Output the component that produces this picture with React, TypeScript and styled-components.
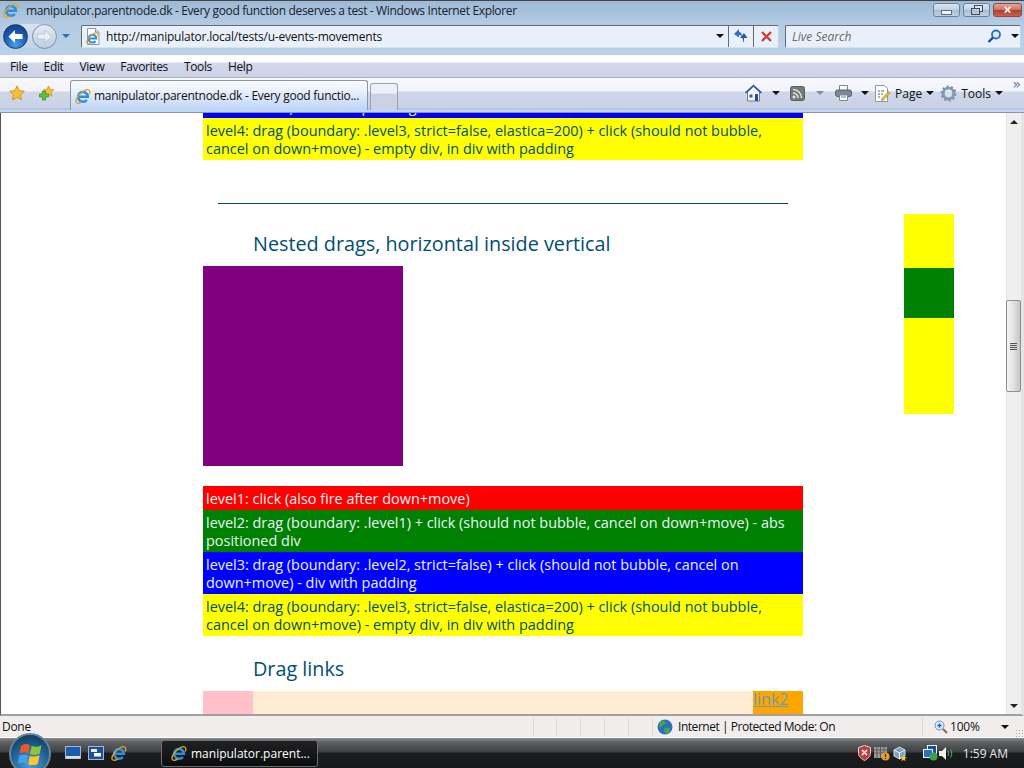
import React from 'react';
import styled, {createGlobalStyle} from 'styled-components';

const GlobalStyle = createGlobalStyle`
    html, body {
        margin: 0;
        padding: 0;
        width: 1024px;
        height: 768px;
        overflow: hidden;
        background: #fff;
    }
`

const chromeFont = `"Open Sans", "Noto Sans", sans-serif`

const IeMark = () => (
    <>
        <path d="M3.600 8.700h9.300A4.900 4.900 0 1 0 11.900 11.900" fill="none" stroke="#2b8fe0" strokeWidth="2.500"/>
        <path d="M14.300 6.400C16 2.400 13.200.400 9.200 2.800 4.200 5.800-.3 11.800 1.200 14.400c1 1.400 3.600.8 5.500-.3" fill="none" stroke="#e5a21e" strokeWidth="1.300"/>
    </>
)

const IeIcon = ({size = 16}: { size?: number }) => (
    <svg width={size} height={size} viewBox="0 0 16 16"><IeMark/></svg>
)

const BackIcon = () => (
    <svg width="17" height="15" viewBox="0 0 17 15">
        <path d="M8 1 1.500 7.500 8 14V10h7.500V5H8z" fill="#fff"/>
    </svg>
)

const ForwardIcon = () => (
    <svg width="17" height="15" viewBox="0 0 17 15">
        <path d="M9 1l6.500 6.500L9 14V10H1.500V5H9z" fill="#e9eff5" stroke="#adbccd" strokeWidth=".7"/>
    </svg>
)

const PageIcon = () => (
    <svg width="16" height="17" viewBox="0 0 16 17">
        <path d="M2.500.5h8l3.500 3.500v12.500H2.500z" fill="#fff" stroke="#8b97a8"/>
        <path d="M10.500.5V4H14" fill="#dfe6ee" stroke="#8b97a8"/>
        <g transform="translate(1 3.500) scale(.8)"><IeMark/></g>
    </svg>
)

const RefreshIcon = () => (
    <svg width="16" height="14" viewBox="0 0 16 14">
        <path d="M6 0 1 5l5 3.500V6c1.500 0 2.500.5 3 1.500C9 4.500 8 3 6 3z" fill="#2f6fc0"/>
        <path d="M11 14V9h3.500L11 4 7 9h2.500c.3 1.800.7 3.500 1.500 5z" fill="#1f5ca8"/>
    </svg>
)

const StopIcon = () => (
    <svg width="13" height="13" viewBox="0 0 13 13">
        <path d="M2 2l9 9M11 2l-9 9" stroke="#c9403c" strokeWidth="2.400"/>
    </svg>
)

const SearchGlass = () => (
    <svg width="15" height="15" viewBox="0 0 15 15">
        <circle cx="9" cy="5.500" r="4" fill="#dcecfa" stroke="#2a6fbf" strokeWidth="1.800"/>
        <path d="M6 8.500 1.500 13" stroke="#1d4f8f" strokeWidth="2.400"/>
    </svg>
)

const FavoritesStar = () => (
    <svg width="16" height="16" viewBox="0 0 16 16">
        <path d="M8 .8l2.200 4.800 5.100.6-3.800 3.500 1.100 5.200L8 12.300l-4.600 2.600 1.100-5.200L.7 6.200l5.100-.6z" fill="#f8c12e" stroke="#c98a14" strokeWidth=".8"/>
    </svg>
)

const AddFavorite = () => (
    <svg width="16" height="16" viewBox="0 0 16 16">
        <path d="M9.500 1l1.600 3.400 3.700.5-2.700 2.500.7 3.700-3.300-1.800-3.300 1.800.7-3.700L4.200 4.900l3.700-.5z" fill="#f8c12e" stroke="#c98a14" strokeWidth=".7"/>
        <path d="M3.500 6h3v3h3v3h-3v3h-3v-3h-3V9h3z" fill="#66c23a" stroke="#2f8a20" strokeWidth=".7"/>
    </svg>
)

const HomeIcon = () => (
    <svg width="17" height="18" viewBox="0 0 17 18">
        <path d="M2.500 8v9h12V8L8.500 2.500z" fill="#f2f4f7" stroke="#6f7d8f"/>
        <path d="M.5 9 8.500 1.500 16.500 9" fill="none" stroke="#2c5aa8" strokeWidth="1.600"/>
        <path d="M10 10h3v7h-3z" fill="#1f4f9c"/>
        <path d="M4.500 10.500h3v3h-3z" fill="#39608f"/>
    </svg>
)

const FeedIcon = () => (
    <svg width="15" height="15" viewBox="0 0 15 15">
        <rect x=".5" y=".5" width="14" height="14" rx="2" fill="#77787a" stroke="#5c5d60"/>
        <circle cx="4" cy="11" r="1.500" fill="#e4e4e4"/>
        <path d="M3 7a5 5 0 0 1 5 5M3 3.500a8.500 8.500 0 0 1 8.500 8.500" fill="none" stroke="#e4e4e4" strokeWidth="1.500"/>
    </svg>
)

const PrintIcon = () => (
    <svg width="17" height="16" viewBox="0 0 17 16">
        <path d="M4.500.5h8v5h-8z" fill="#fff" stroke="#7d8793"/>
        <rect x=".5" y="5" width="16" height="6.500" rx="2" fill="#7c8794" stroke="#59636e"/>
        <path d="M4.500 10h8v5.500h-8z" fill="#fff" stroke="#7d8793"/>
        <path d="M6 12h5" stroke="#3d8fd0"/>
    </svg>
)

const PageToolIcon = () => (
    <svg width="17" height="17" viewBox="0 0 17 17">
        <path d="M1.500.5h9l3 3v13h-12z" fill="#fff" stroke="#8d96a3"/>
        <path d="M4 6h2M7 6h3M4 9h2M7 9h2M4 12h2" stroke="#59636e"/>
        <path d="M8 13.500l6.500-7 1.500 1.500-6.500 7-2 .5z" fill="#ecc04a" stroke="#a97c20" strokeWidth=".7"/>
    </svg>
)

const GearIcon = () => (
    <svg width="17" height="17" viewBox="0 0 17 17">
        <circle cx="8.500" cy="8.500" r="5.300" fill="none" stroke="#8499b0" strokeWidth="2.800"/>
        <circle cx="8.500" cy="8.500" r="7" fill="none" stroke="#7f93aa" strokeWidth="2" strokeDasharray="2.200 2.200"/>
        <circle cx="8.500" cy="8.500" r="3" fill="#d8e1ea"/>
    </svg>
)

const GlobeIcon = () => (
    <svg width="16" height="16" viewBox="0 0 16 16">
        <circle cx="8" cy="8" r="7.500" fill="#2f6fbf"/>
        <path d="M5 2c2-.8 4 .5 3.500 2.500C8 6 5.500 5.500 4.500 7.500 3.500 9 2 7.500 2 6c.3-1.800 1.500-3.300 3-4zM8 9c2-.8 4.500-.3 5 1.500.3 1.500-1.500 3.800-3.500 4C7.500 14 6.500 10 8 9z" fill="#46a93f"/>
    </svg>
)

const ZoomIcon = () => (
    <svg width="14" height="14" viewBox="0 0 14 14">
        <circle cx="5.500" cy="5.500" r="4.500" fill="#dcebf8" stroke="#6d8fb3"/>
        <path d="M3.500 5.500h4M5.500 3.500v4" stroke="#1d5fb5" strokeWidth="1.500"/>
        <path d="M9 9l4 4" stroke="#8a6a3c" strokeWidth="2"/>
    </svg>
)

const WindowsOrb = () => (
    <StartOrb>
        <svg width="25" height="24" viewBox="0 0 24 23">
            <path d="M3 3.500c3-2 6-2 8.500-.5L10 11C7.500 9.500 4.500 9.500 1.500 11.500z" fill="#f0562a"/>
            <path d="M13 3.500c3 1.500 6 1.500 9.500-.5L21 11c-3.500 1.800-6.500 1.800-9.500.5z" fill="#8cc63a"/>
            <path d="M1.200 13c3-1.500 6-1.500 8.500 0L8.300 21c-3-1.500-5.500-1.500-8.500 0z" fill="#3fa4ea"/>
            <path d="M11.200 13.300c3 1 6 1 9.500-.5L19 21c-3.300 1.500-6.300 1.500-9.200.3z" fill="#fbc72f"/>
        </svg>
    </StartOrb>
)

const DesktopIcon = () => (
    <svg width="16" height="14" viewBox="0 0 16 14">
        <rect x=".5" y=".5" width="15" height="12" fill="#1c5bb0" stroke="#a6b7cc"/>
        <path d="M1 10h14v2.500H1z" fill="#d9dfe7"/>
    </svg>
)

const SwitchIcon = () => (
    <svg width="16" height="14" viewBox="0 0 16 14">
        <rect x=".5" y=".5" width="15" height="13" fill="#1c4f9c" stroke="#a6b7cc"/>
        <path d="M3 3h6v3H3z" fill="#e9eef5"/>
        <path d="M6 7h7v3.500H6z" fill="#fff"/>
    </svg>
)

const ShieldIcon = () => (
    <svg width="13" height="16" viewBox="0 0 13 16">
        <path d="M6.500.5 12.500 2.500v6c0 3-3 5.500-6 7-3-1.500-6-4-6-7v-6z" fill="#c8393c" stroke="#d9d9d9"/>
        <path d="M4 5l5 5M9 5l-5 5" stroke="#fff" strokeWidth="1.700"/>
    </svg>
)

const UpdatesIcon = () => (
    <svg width="16" height="15" viewBox="0 0 16 15">
        <rect x="0" y="1" width="13" height="11" fill="#9a9a9a"/>
        <path d="M0 4h13M0 7h13M3 1v11M6.500 1v11M10 1v11" stroke="#5e5e5e"/>
        <circle cx="11.500" cy="10.500" r="4" fill="#eda01c"/>
        <path d="M11.500 8v3M11.500 12v1" stroke="#222" strokeWidth="1.200"/>
    </svg>
)

const BoxIcon = () => (
    <svg width="14" height="15" viewBox="0 0 14 15">
        <path d="M6.500 1 12 4v6l-5.500 3L1 10V4z" fill="#7fa1c0" stroke="#d6dde5"/>
        <path d="M1 4l5.500 3L12 4M6.500 7v6" fill="none" stroke="#f0f3f6"/>
        <path d="M10.500 9l1 2 2.200.3-1.600 1.500.4 2.200-2-1-2 1 .4-2.200-1.600-1.500 2.200-.3z" fill="#eec23a"/>
    </svg>
)

const NetworkIcon = () => (
    <svg width="15" height="16" viewBox="0 0 15 16">
        <rect x="4.500" y=".5" width="9" height="8" fill="#1c4f9c" stroke="#eef2f6"/>
        <rect x=".5" y="4.500" width="9" height="8" fill="#2a6fc0" stroke="#eef2f6"/>
        <circle cx="10.500" cy="11.500" r="4" fill="#3f9f4a"/>
    </svg>
)

const SpeakerIcon = () => (
    <svg width="16" height="15" viewBox="0 0 16 15">
        <path d="M1 5h3l4-4v13l-4-4H1z" fill="#eef1f4"/>
        <path d="M10 5c1 1.500 1 3.500 0 5M12.500 3.500c1.700 2.500 1.700 5.500 0 8" fill="none" stroke="#59b86a"/>
    </svg>
)

const Window = styled.div`
    position: relative;
    width: 1024px;
    height: 768px;
    overflow: hidden;
    display: flex;
    flex-direction: column;
    font-family: ${chromeFont};
    font-size: 12px;
    color: #111;
`

const Frame = styled.div`
    height: 55px;
    flex-shrink: 0;
    box-sizing: border-box;
    border-top: 1px solid #444;
    background: linear-gradient(#9db9d6 0, #b3cae2 22px, #bcd2e9 55px);
`

const TitleBar = styled.div`
    height: 22px;
    margin-top: -2px;
    display: flex;
    align-items: center;
    padding-left: 3px;
`

const TitleText = styled.span`
    margin-left: 7px;
    font-size: 12px;
    letter-spacing: -0.35px;
    white-space: nowrap;
    color: #17212b;
`

const WindowButtons = styled.div`
    margin-left: auto;
    display: flex;
    gap: 3px;
    padding-right: 2px;
    align-self: flex-start;
    padding-top: 4px;
`

const WindowButton = styled.div<{ $close?: boolean }>`
    width: ${p => p.$close ? 29 : 27}px;
    height: 14px;
    box-sizing: border-box;
    border: 1px solid ${p => p.$close ? '#8c4a42' : '#6f8197'};
    border-radius: 3px;
    display: flex;
    align-items: center;
    justify-content: center;
    background: ${p => p.$close
        ? 'linear-gradient(#e2a79c 0, #c9705f 50%, #b53c2b 51%, #c9604e 100%)'
        : 'linear-gradient(#dbe6f1 0, #bfd0e3 50%, #a8bdd4 51%, #bed1e5 100%)'};
`

const MinGlyph = styled.span`
    width: 9px;
    height: 3px;
    margin-top: 4px;
    background: #f3f6fa;
    border: 1px solid #5c6c80;
`

const RestoreGlyph = styled.span`
    width: 7px;
    height: 5px;
    border: 1px solid #3d4a5a;
    box-shadow: 3px -3px 0 -1px #dde6f0, 3px -3px 0 0 #3d4a5a;
    margin: 2px 3px 0 0;
`

const CloseGlyph = styled.span`
    color: #fff;
    font-size: 13px;
    line-height: 12px;
    font-weight: 700;
    font-family: "Liberation Sans", sans-serif;
`

const AddressRow = styled.div`
    height: 24px;
    margin-top: 3px;
    display: flex;
    align-items: center;
    padding-left: 3px;
`

const NavPill = styled.div`
    width: 54px;
    height: 24px;
    display: flex;
    gap: 4px;
    border-radius: 12px;
    background: linear-gradient(#d6e2ef, #c3d4e6);
`

const NavButton = styled.div<{ $active?: boolean }>`
    width: 25px;
    height: 25px;
    box-sizing: border-box;
    border-radius: 50%;
    display: flex;
    align-items: center;
    justify-content: center;
    border: 1px solid ${p => p.$active ? '#1c3d73' : '#7f90a6'};
    background: ${p => p.$active
        ? 'radial-gradient(circle at 50% 85%, #4aa0ea, #1b55ad 55%, #123a80)'
        : 'linear-gradient(#e3ebf4, #bccddf)'};
`

const DropArrow = styled.span<{ $color?: string; $size?: number }>`
    width: 0;
    height: 0;
    flex-shrink: 0;
    border-left: ${p => p.$size ?? 4}px solid transparent;
    border-right: ${p => p.$size ?? 4}px solid transparent;
    border-top: ${p => p.$size ?? 4}px solid ${p => p.$color ?? '#111'};
`

const NavArrow = styled(DropArrow)`
    margin: 0 11px 0 5px;
`

const Field = styled.div<{ $width: number; $left?: number }>`
    width: ${p => p.$width}px;
    margin-left: ${p => p.$left ?? 0}px;
    height: 23px;
    box-sizing: border-box;
    flex-shrink: 0;
    display: flex;
    align-items: center;
    background: #eaf0f9;
    border: 1px solid #5f6c7a;
    border-right-color: #c6d3e2;
    border-bottom-color: #d8e2ee;
    border-radius: 2px;
    padding-left: 3px;
`

const AddressText = styled.span`
    margin-left: 5px;
    font-size: 12px;
    letter-spacing: -0.22px;
    white-space: nowrap;
`

const FieldArrow = styled(DropArrow)`
    margin-left: auto;
    margin-right: 4px;
`

const FieldCell = styled.div`
    width: 25px;
    height: 21px;
    box-sizing: border-box;
    border-left: 1px solid #5f6c7a;
    display: flex;
    align-items: center;
    justify-content: center;
    flex-shrink: 0;
`

const SearchText = styled.span`
    font-style: italic;
    color: #6b6b6b;
    margin-left: 3px;
    font-size: 12px;
`

const SearchEnd = styled.div`
    margin-left: auto;
    display: flex;
    align-items: center;
    gap: 9px;
    padding-right: 1px;
`

const MenuBar = styled.div`
    height: 23px;
    flex-shrink: 0;
    display: flex;
    align-items: center;
    gap: 16px;
    padding-left: 10px;
    background: linear-gradient(#fff 0, #fff 7px, #d3d9ea 8px, #ccd3e6 100%);
    border-bottom: 1px solid #a9afbe;
    box-sizing: border-box;
    font-size: 12px;
    letter-spacing: -0.35px;
`

const CommandBar = styled.div`
    height: 35px;
    flex-shrink: 0;
    box-sizing: border-box;
    display: flex;
    align-items: flex-end;
    padding-left: 9px;
    background: linear-gradient(#f7f8fc 0, #f2f4f9 13px, #cfd7e8 14px, #c9d2e6 30px, #aeb6cc 31px, #c2d7f6 32px, #c2d7f6 34px, #555 35px);
`

const FavIcons = styled.div`
    display: flex;
    gap: 14px;
    align-items: flex-start;
    margin-bottom: 12px;
`

const Tabs = styled.div`
    display: flex;
    align-items: flex-end;
    margin-left: 15px;
    margin-bottom: 3px;
    gap: 2px;
`

const ActiveTab = styled.div`
    width: 298px;
    height: 30px;
    box-sizing: border-box;
    border: 1px solid #8d95a8;
    border-bottom: none;
    border-radius: 3px 3px 0 0;
    display: flex;
    align-items: center;
    padding-left: 4px;
    gap: 3px;
    background: linear-gradient(#f8fafd 0, #eef3fb 8px, #bdd5f6 100%);
`

const TabLabel = styled.span`
    font-size: 12px;
    letter-spacing: -0.27px;
    white-space: nowrap;
`

const NewTab = styled.div`
    width: 28px;
    height: 27px;
    box-sizing: border-box;
    border: 1px solid #9aa2b4;
    border-bottom: none;
    border-radius: 3px 3px 0 0;
    background: linear-gradient(#eef0f7 0, #eef0f7 9px, #cbd2e4 10px);
`

const CommandTools = styled.div`
    margin-left: auto;
    margin-bottom: 7px;
    height: 26px;
    display: flex;
    align-items: center;
    padding-right: 4px;
    position: relative;
`

const ToolGroup = styled.div<{ $gap: number; $after: number }>`
    display: flex;
    align-items: center;
    gap: ${p => p.$gap}px;
    margin-right: ${p => p.$after}px;
`

const ToolLabel = styled.span`
    font-size: 12px;
`

const Chevrons = styled.span`
    position: absolute;
    right: 3px;
    top: -2px;
    font-size: 14px;
    line-height: 12px;
    color: #6a6fa5;
    font-family: "DejaVu Sans", sans-serif;
`

const Viewport = styled.div`
    flex: 1;
    min-height: 0;
    display: flex;
    background: #fff;
    border-left: 1px solid #555;
    border-right: 3px solid #e4e4e4;
    border-bottom: 2px solid #a0a0a0;
`

const Page = styled.div`
    flex: 1;
    position: relative;
    overflow: hidden;
    font-family: "Open Sans", sans-serif;
    font-size: 14.45px;
    line-height: 18px;
    color: #00506f;
`

const Column = styled.div`
    width: 600px;
    margin: -19px 0 0 202px;
`

const Level = styled.div<{ $bg: string; $light?: boolean }>`
    padding: 4px 3px 2px;
    background: ${p => p.$bg};
    color: ${p => p.$light ? '#e8f4f8' : '#00506f'};
`

const Rule = styled.hr`
    width: 570px;
    height: 1px;
    margin: 43px 0 0 15px;
    border: none;
    background: #00466a;
`

const Heading = styled.h2`
    margin: 0 0 0 50px;
    font-size: 19.8px;
    line-height: 28px;
    font-weight: 400;
    color: #004f73;
`

const NestedHeading = styled(Heading)`
    margin-top: 26px;
    margin-bottom: 8px;
`

const LinksHeading = styled(Heading)`
    margin-top: 19px;
    margin-bottom: 8px;
`

const PurpleBox = styled.div`
    width: 200px;
    height: 200px;
    margin-bottom: 20px;
    background: purple;
`

const LinkRow = styled.div`
    height: 50px;
    display: flex;
    background: #ffedd3;
`

const LinkEnd = styled.div<{ $bg: string }>`
    width: 50px;
    background: ${p => p.$bg};
`

const LinkText = styled.a`
    display: block;
    color: #6a9fb4;
    font-size: 16px;
    line-height: 16px;
    text-decoration: underline;
`

const RowSpacer = styled.div`
    flex: 1;
`

const DragRail = styled.div`
    position: absolute;
    left: 903px;
    top: 101px;
    width: 50px;
    height: 200px;
    background: #ff0;
`

const DragHandle = styled.div`
    width: 50px;
    height: 50px;
    margin-top: 54px;
    background: green;
    display: inline-block;
    vertical-align: top;
`

const Scrollbar = styled.div`
    width: 15px;
    flex-shrink: 0;
    display: flex;
    flex-direction: column;
    align-items: center;
    justify-content: space-between;
    position: relative;
    background: #efefef;
    border-left: 1px solid #e5e5e5;
    box-sizing: border-box;
    padding: 7px 0 6px;
`

const ScrollUp = styled.span`
    width: 0;
    height: 0;
    border-left: 4px solid transparent;
    border-right: 4px solid transparent;
    border-bottom: 4px solid #222;
`

const ScrollThumb = styled.div`
    position: absolute;
    left: -1px;
    top: 187px;
    width: 15px;
    height: 92px;
    box-sizing: border-box;
    border: 1px solid #8f8f8f;
    border-radius: 2px;
    display: flex;
    align-items: center;
    justify-content: center;
    background: linear-gradient(90deg, #f4f4f4, #e4e4e4 45%, #c6c6c6);
`

const ThumbGrip = styled.span`
    width: 7px;
    height: 7px;
    background: repeating-linear-gradient(#555 0, #555 1px, #ddd 1px, #ddd 2px);
`

const StatusBar = styled.div`
    height: 22px;
    flex-shrink: 0;
    box-sizing: border-box;
    display: flex;
    align-items: center;
    background: #f0edec;
    border-bottom: 1px solid #fff;
    font-size: 12px;
    padding-left: 2px;
`

const StatusText = styled.span`
    width: 531px;
    flex-shrink: 0;
    letter-spacing: -0.3px;
`

const StatusCell = styled.div<{ $width: number; $inset?: number }>`
    width: ${p => p.$width}px;
    height: 20px;
    box-sizing: border-box;
    flex-shrink: 0;
    display: flex;
    align-items: center;
    gap: 4px;
    border-left: 1px solid #dcd9d8;
    padding-left: ${p => p.$inset ?? 4}px;
    white-space: nowrap;
`

const ZoneLabel = styled.span`
    letter-spacing: -0.46px;
    margin-left: 1px;
`

const ZoomLabel = styled.span`
    margin-left: -2px;
    letter-spacing: -0.2px;
`

const ZoomArrow = styled(DropArrow)`
    margin-left: 17px;
`

const Grip = styled.span`
    position: absolute;
    right: 1px;
    bottom: 31px;
    width: 8px;
    height: 8px;
    background: radial-gradient(circle, #a8a8a8 1px, transparent 1px) 0 0 / 3px 3px;
`

const Taskbar = styled.div`
    height: 30px;
    flex-shrink: 0;
    box-sizing: border-box;
    display: flex;
    align-items: center;
    padding-left: 65px;
    color: #fff;
    background: linear-gradient(#8a8c8e 0, #5f6264 4px, #3c3e40 14px, #1b1d1f 15px, #17191b 100%);
`

const QuickLaunch = styled.div`
    display: flex;
    gap: 7px;
    align-items: center;
`

const TaskButton = styled.div`
    width: 157px;
    height: 27px;
    margin-left: 34px;
    box-sizing: border-box;
    border: 1px solid #6b6d70;
    border-radius: 3px;
    display: flex;
    align-items: center;
    padding-left: 9px;
    gap: 4px;
    background: linear-gradient(#1f2123, #0b0c0d);
`

const TaskLabel = styled.span`
    font-size: 12px;
    color: #fff;
    white-space: nowrap;
`

const Tray = styled.div`
    margin-left: auto;
    display: flex;
    align-items: center;
    padding-right: 16px;
`

const TrayGroup = styled.div`
    display: flex;
    align-items: center;
    gap: 3px;
    margin-right: 16px;
`

const Clock = styled.span`
    margin-left: 9px;
    font-size: 12px;
    color: #e8e8e8;
    white-space: nowrap;
`

const StartOrb = styled.div`
    position: absolute;
    left: 9px;
    top: 733px;
    width: 42px;
    height: 42px;
    border-radius: 50%;
    box-sizing: border-box;
    display: flex;
    justify-content: center;
    padding-top: 7px;
    border: 2px solid #6d8395;
    background: radial-gradient(circle at 50% 80%, #4f9bd6, #1d5f92 55%, #0e2c46);
`

const menuItems = ['File', 'Edit', 'View', 'Favorites', 'Tools', 'Help']

const levelFour = 'level4: drag (boundary: .level3, strict=false, elastica=200) + click (should not bubble, cancel on down+move) - empty div, in div with padding'
const levelThree = 'level3: drag (boundary: .level2, strict=false) + click (should not bubble, cancel on down+move) - div with padding'

export default function App() {
    return (
        <Window>
            <GlobalStyle/>
            <Frame>
                <TitleBar>
                    <IeIcon/>
                    <TitleText>manipulator.parentnode.dk - Every good function deserves a test - Windows Internet Explorer</TitleText>
                    <WindowButtons>
                        <WindowButton><MinGlyph/></WindowButton>
                        <WindowButton><RestoreGlyph/></WindowButton>
                        <WindowButton $close><CloseGlyph>×</CloseGlyph></WindowButton>
                    </WindowButtons>
                </TitleBar>
                <AddressRow>
                    <NavPill>
                        <NavButton $active><BackIcon/></NavButton>
                        <NavButton><ForwardIcon/></NavButton>
                    </NavPill>
                    <NavArrow $color="#3b6ea8"/>
                    <Field $width={698}>
                        <PageIcon/>
                        <AddressText>http://manipulator.local/tests/u-events-movements</AddressText>
                        <FieldArrow/>
                        <FieldCell><RefreshIcon/></FieldCell>
                        <FieldCell><StopIcon/></FieldCell>
                    </Field>
                    <Field $width={236} $left={6}>
                        <SearchText>Live Search</SearchText>
                        <SearchEnd>
                            <SearchGlass/>
                            <DropArrow/>
                        </SearchEnd>
                    </Field>
                </AddressRow>
            </Frame>
            <MenuBar>
                {menuItems.map(item => <span key={item}>{item}</span>)}
            </MenuBar>
            <CommandBar>
                <FavIcons>
                    <FavoritesStar/>
                    <AddFavorite/>
                </FavIcons>
                <Tabs>
                    <ActiveTab>
                        <IeIcon/>
                        <TabLabel>manipulator.parentnode.dk - Every good functio...</TabLabel>
                    </ActiveTab>
                    <NewTab/>
                </Tabs>
                <CommandTools>
                    <ToolGroup $gap={10} $after={10}><HomeIcon/><DropArrow/></ToolGroup>
                    <ToolGroup $gap={11} $after={11}><FeedIcon/><DropArrow $color="#8a8f98"/></ToolGroup>
                    <ToolGroup $gap={9} $after={5}><PrintIcon/><DropArrow/></ToolGroup>
                    <ToolGroup $gap={4} $after={6}><PageToolIcon/><ToolLabel>Page</ToolLabel><DropArrow/></ToolGroup>
                    <ToolGroup $gap={4} $after={17}><GearIcon/><ToolLabel>Tools</ToolLabel><DropArrow/></ToolGroup>
                    <Chevrons>»</Chevrons>
                </CommandTools>
            </CommandBar>
            <Viewport>
                <Page>
                    <Column>
                        <Level $bg="#00f" $light>down+move) - div with padding</Level>
                        <Level $bg="#ff0">{levelFour}</Level>
                        <Rule/>
                        <NestedHeading>Nested drags, horizontal inside vertical</NestedHeading>
                        <PurpleBox/>
                        <Level $bg="#f00" $light>level1: click (also fire after down+move)</Level>
                        <Level $bg="green" $light>level2: drag (boundary: .level1) + click (should not bubble, cancel on down+move) - abs positioned div</Level>
                        <Level $bg="#00f" $light>{levelThree}</Level>
                        <Level $bg="#ff0">{levelFour}</Level>
                        <LinksHeading>Drag links</LinksHeading>
                        <LinkRow>
                            <LinkEnd $bg="pink"/>
                            <RowSpacer/>
                            <LinkEnd $bg="orange"><LinkText>link2</LinkText></LinkEnd>
                        </LinkRow>
                    </Column>
                    <DragRail><DragHandle/></DragRail>
                </Page>
                <Scrollbar>
                    <ScrollUp/>
                    <ScrollThumb><ThumbGrip/></ScrollThumb>
                    <DropArrow $color="#222"/>
                </Scrollbar>
            </Viewport>
            <StatusBar>
                <StatusText>Done</StatusText>
                <StatusCell $width={23}/>
                <StatusCell $width={24}/>
                <StatusCell $width={24}/>
                <StatusCell $width={24}/>
                <StatusCell $width={24}/>
                <StatusCell $width={270}>
                    <GlobeIcon/>
                    <ZoneLabel>Internet | Protected Mode: On</ZoneLabel>
                </StatusCell>
                <StatusCell $width={100} $inset={11}>
                    <ZoomIcon/>
                    <ZoomLabel>100%</ZoomLabel>
                    <ZoomArrow/>
                </StatusCell>
            </StatusBar>
            <Taskbar>
                <QuickLaunch>
                    <DesktopIcon/>
                    <SwitchIcon/>
                    <IeIcon/>
                </QuickLaunch>
                <TaskButton>
                    <IeIcon/>
                    <TaskLabel>manipulator.parent...</TaskLabel>
                </TaskButton>
                <Tray>
                    <TrayGroup>
                        <ShieldIcon/>
                        <UpdatesIcon/>
                        <BoxIcon/>
                    </TrayGroup>
                    <NetworkIcon/>
                    <SpeakerIcon/>
                    <Clock>1:59 AM</Clock>
                </Tray>
            </Taskbar>
            <WindowsOrb/>
            <Grip/>
        </Window>
    );
}
